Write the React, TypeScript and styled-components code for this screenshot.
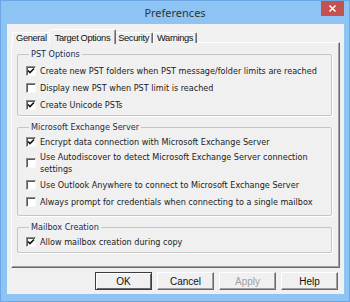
import React from "react";
import styled, { createGlobalStyle } from "styled-components";

const Global = createGlobalStyle`
  html, body {
    margin: 0;
    padding: 0;
    width: 350px;
    height: 302px;
    overflow: hidden;
  }
  body {
    font-family: "DejaVu Sans Condensed", "DejaVu Sans", sans-serif;
  }
`;

const Window = styled.div`
  width: 350px;
  height: 302px;
  box-sizing: border-box;
  background: #8dc4f3;
  border: 1px solid #6ba7e2;
  display: flex;
  flex-direction: column;
`;

const TitleBar = styled.div`
  height: 23px;
  flex: none;
  display: flex;
  align-items: flex-start;
  padding-left: 28px;
`;

const Title = styled.div`
  flex: 1;
  text-align: center;
  font-family: "Noto Sans", "Open Sans", sans-serif;
  font-size: 11px;
  color: #333;
  line-height: 23px;
`;

const CloseButton = styled.svg`
  flex: none;
  display: block;
  margin-right: 5px;
`;

const Client = styled.div`
  flex: 1;
  margin: 0 5px 7px 6px;
  background: #f0f0f0;
  display: flex;
  flex-direction: column;
  padding-top: 5px;
`;

const TabStrip = styled.div`
  display: flex;
  align-items: flex-end;
  height: 14px;
  margin: 0 0 -1px 5px;
  position: relative;
  z-index: 1;
`;

const Tab = styled.div<{ $active?: boolean }>`
  font-family: "Liberation Sans", Arial, sans-serif;
  font-size: 9.3px;
  letter-spacing: -0.35px;
  color: #111;
  box-sizing: border-box;
  height: ${(p) => (p.$active ? 15 : 11)}px;
  margin: ${(p) => (p.$active ? "0 -2px -1px" : "0")};
  padding: ${(p) => (p.$active ? "1px 5px 0" : "0 3px")};
  background: #f0f0f0;
  border-top: 1px solid #fff;
  border-left: 1px solid #fff;
  border-right: 1px solid #696969;
  box-shadow: inset -1px 0 0 #a0a0a0;
  border-radius: 2px 2px 0 0;
  display: flex;
  align-items: center;
  position: relative;
  z-index: ${(p) => (p.$active ? 2 : 1)};
  white-space: nowrap;
`;

const Panel = styled.div`
  margin: 0 4px;
  height: 226px;
  box-sizing: border-box;
  border-top: 1px solid #fff;
  border-left: 1px solid #fff;
  border-right: 1px solid #696969;
  border-bottom: 1px solid #696969;
  box-shadow: inset -1px -1px 0 #a0a0a0;
  padding: 6px 7px 0 5px;
  display: flex;
  flex-direction: column;
`;

const GroupBox = styled.fieldset<{ $pt: number; $pb: number; $mt?: number }>`
  margin: ${(p) => p.$mt ?? 0}px 0 0 0;
  padding: ${(p) => p.$pt}px 6px ${(p) => p.$pb}px 8px;
  border: 1px solid #c5c5c5;
  border-radius: 2px;
  box-shadow: 1px 1px 0 #fff;
  min-width: 0;
`;

const Legend = styled.legend`
  padding: 0 2px;
  margin-left: 3px;
  font-size: 9px;
  line-height: 11px;
  color: #1c2c4e;
`;

const Row = styled.label`
  display: flex;
  align-items: center;
  gap: 4px;
  box-sizing: border-box;
  min-height: 17px;
  padding: 1px 0;
  font-size: 9px;
  line-height: 12px;
  color: #1a1a1a;
`;

const Box = styled.span`
  flex: none;
  width: 10px;
  height: 10px;
  box-sizing: border-box;
  background: #fff;
  border: 1px solid;
  border-color: #8a8a8a #f8f8f8 #f8f8f8 #8a8a8a;
  box-shadow: inset 1px 1px 0 #5a5a5a;
  display: flex;
  align-items: center;
  justify-content: center;
`;

const ButtonRow = styled.div`
  display: flex;
  justify-content: flex-end;
  gap: 5px;
  margin: 4px 6px 0 0;
`;

const Button = styled.div<{ $default?: boolean; $disabled?: boolean }>`
  width: 57px;
  height: 18px;
  box-sizing: border-box;
  font-family: "Liberation Sans", Arial, sans-serif;
  font-size: 10px;
  color: ${(p) => (p.$disabled ? "#a0a0a0" : "#111")};
  background: #f0f0f0;
  border: 1px solid;
  border-color: ${(p) =>
    p.$default ? "#3c3c3c" : "#fff #696969 #696969 #fff"};
  box-shadow: ${(p) =>
    p.$default
      ? "inset 1px 1px 0 #fff, inset -1px -1px 0 #696969"
      : "inset -1px -1px 0 #a0a0a0"};
  display: flex;
  align-items: center;
  justify-content: center;
`;

const Check: React.FC<{ checked?: boolean }> = ({ checked }) => (
  <Box>
    {checked && (
      <svg width="8" height="8" viewBox="0 0 8 8">
        <path d="M1 3.5 L3 5.5 L7 1.5" stroke="#111" strokeWidth="1.6" fill="none" />
      </svg>
    )}
  </Box>
);

const Option: React.FC<{ checked?: boolean; text: string }> = ({ checked, text }) => (
  <Row>
    <Check checked={checked} />
    <span>{text}</span>
  </Row>
);

export default function App() {
  return (
    <>
      <Global />
      <Window>
        <TitleBar>
          <Title>Preferences</Title>
          <CloseButton width="23" height="15" viewBox="0 0 23 15">
            <rect x="0" y="0" width="23" height="15" fill="#c75050" />
            <path d="M8.5 4.5 L14.5 10.5 M14.5 4.5 L8.5 10.5" stroke="#ffffff" strokeWidth="1.5" />
          </CloseButton>
        </TitleBar>
        <Client>
          <TabStrip>
            <Tab>General</Tab>
            <Tab $active>Target Options</Tab>
            <Tab>Security</Tab>
            <Tab>Warnings</Tab>
          </TabStrip>
          <Panel>
            <GroupBox $pt={2} $pb={2}>
              <Legend>PST Options</Legend>
              <Option checked text="Create new PST folders when PST message/folder limits are reached" />
              <Option text="Display new PST when PST limit is reached" />
              <Option checked text="Create Unicode PSTs" />
            </GroupBox>
            <GroupBox $pt={0} $pb={5} $mt={6}>
              <Legend>Microsoft Exchange Server</Legend>
              <Option checked text="Encrypt data connection with Microsoft Exchange Server" />
              <Option text="Use Autodiscover to detect Microsoft Exchange Server connection settings" />
              <Option text="Use Outlook Anywhere to connect to Microsoft Exchange Server" />
              <Option text="Always prompt for credentials when connecting to a single mailbox" />
            </GroupBox>
            <GroupBox $pt={0} $pb={2} $mt={6}>
              <Legend>Mailbox Creation</Legend>
              <Option checked text="Allow mailbox creation during copy" />
            </GroupBox>
          </Panel>
          <ButtonRow>
            <Button $default>OK</Button>
            <Button>Cancel</Button>
            <Button $disabled>Apply</Button>
            <Button>Help</Button>
          </ButtonRow>
        </Client>
      </Window>
    </>
  );
}
